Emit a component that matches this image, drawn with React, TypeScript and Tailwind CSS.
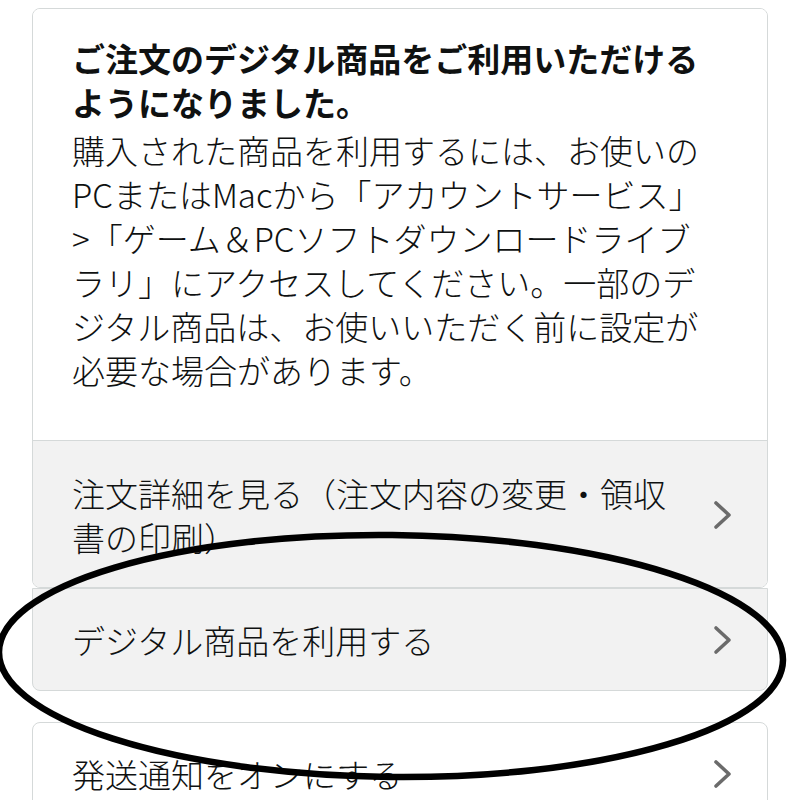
import React from "react";

const Chevron = () => (
  <svg width="20" height="30" viewBox="0 0 20 30" className="shrink-0">
    <polyline
      points="3,3 16,15 3,27"
      fill="none"
      stroke="#6b6b6b"
      strokeWidth="3.6"
      strokeLinecap="round"
      strokeLinejoin="round"
    />
  </svg>
);

type RowProps = {
  children: React.ReactNode;
  className?: string;
};

const Row: React.FC<RowProps> = ({ children, className }) => (
  <div
    className={`flex items-center justify-between border border-[#d5d9d9] pl-[39px] pr-[34px] ${className ?? ""}`}
  >
    <div className="w-[617px]">{children}</div>
    <Chevron />
  </div>
);

export default function App() {
  return (
    <div
      className="relative w-[800px] h-[800px] overflow-hidden bg-white text-[33px] leading-[44px] font-light text-[#0f1111]"
      style={{ fontFamily: '"Noto Sans CJK JP", "Noto Sans", sans-serif' }}
    >
      <div className="flex flex-col px-[32px] pt-[8px]">
        {/* Order card */}
        <div className="flex flex-col rounded-lg border border-[#d5d9d9] overflow-hidden">
          <div className="bg-white pl-[39px] pr-[20px] pt-[27px] pb-[48px]">
            <p className="font-bold mb-[4px]">
              <span className="block whitespace-nowrap">ご注文のデジタル商品をご利用いただける</span>
              <span className="block whitespace-nowrap">ようになりました。</span>
            </p>
            <p>
              <span className="block whitespace-nowrap">購入された商品を利用するには、お使いの</span>
              <span className="block whitespace-nowrap">PCまたはMacから「アカウントサービス」</span>
              <span className="block whitespace-nowrap">&gt;「ゲーム＆PCソフトダウンロードライブ</span>
              <span className="block whitespace-nowrap">ラリ」にアクセスしてください。一部のデ</span>
              <span className="block whitespace-nowrap">ジタル商品は、お使いいただく前に設定が</span>
              <span className="block whitespace-nowrap">必要な場合があります。</span>
            </p>
          </div>
          <div className="flex items-center justify-between border-t border-[#d5d9d9] bg-[#f2f2f2] pl-[39px] pr-[34px] pt-[30px] pb-[28px]">
            <div className="w-[617px]">注文詳細を見る（注文内容の変更・領収書の印刷）</div>
            <Chevron />
          </div>
        </div>

        <Row className="h-[103px] rounded-b-lg bg-[#f2f2f2]">
          デジタル商品を利用する
        </Row>

        <Row className="h-[103px] mt-[31px] rounded-lg bg-white">
          発送通知をオンにする
        </Row>
      </div>

      {/* hand-drawn annotation */}
      <svg
        className="absolute inset-0 pointer-events-none"
        width="800"
        height="800"
        viewBox="0 0 800 800"
      >
        <ellipse
          cx="391"
          cy="656"
          rx="392"
          ry="121"
          transform="rotate(0.6 391 656)"
          fill="none"
          stroke="#000"
          strokeWidth="6.5"
        />
      </svg>
    </div>
  );
}
